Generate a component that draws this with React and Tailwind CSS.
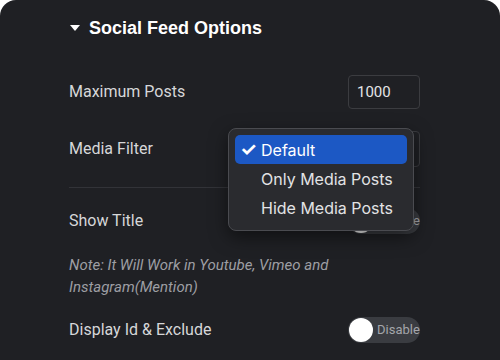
import React from "react";

function Toggle() {
  return (
    <div className="flex h-[26px] w-[72px] items-center rounded-full bg-[#3a3c41] pl-[1px]">
      <div className="h-[24px] w-[24px] rounded-full bg-white" />
      <span className="ml-[4px] text-[13px] text-[#a4a6ab]">Disable</span>
    </div>
  );
}

export default function App() {
  return (
    <div className="h-[360px] w-[500px] overflow-hidden bg-white" style={{ fontFamily: "Roboto, 'Noto Sans', sans-serif" }}>
      <div className="relative h-full w-full rounded-t-[16px] bg-[#1f2024] pl-[69px] pr-[80px]">
        <div className="flex h-[24px] items-center pt-[16px] box-content">
          <svg width="10" height="6" viewBox="0 0 10 6" className="mr-[9px] ml-[1px]">
            <path d="M0 0 L10 0 L5 6 Z" fill="#ffffff" />
          </svg>
          <span className="text-[18px] font-bold text-white" style={{ fontFamily: "'Liberation Sans', Arial, sans-serif" }}>
            Social Feed Options
          </span>
        </div>

        <div className="mt-[35px] flex h-[34px] items-center justify-between">
          <span className="text-[16px] text-[#d6d7d9]">Maximum Posts</span>
          <div className="flex h-[34px] w-[72px] items-center rounded-[4px] border border-[#3b3c40] pl-[8px] text-[15px] text-[#e4e5e7]">
            1000
          </div>
        </div>

        <div className="mt-[22px] flex h-[36px] items-center justify-between">
          <span className="text-[16px] text-[#d6d7d9]">Media Filter</span>
          <div className="flex h-[36px] w-[72px] items-center rounded-[4px] border border-[#3b3c40] pl-[8px] text-[14px] text-[#e4e5e7]">
            Default
          </div>
        </div>

        <div className="mt-[20px] h-px bg-[#323338]" />

        <div className="mt-[20px] flex h-[26px] items-center justify-between">
          <span className="text-[16px] text-[#d6d7d9]">Show Title</span>
          <Toggle />
        </div>

        <div className="mt-[20px] text-[15px] italic leading-[22px] text-[#9d9ea3]">
          <div>Note: It Will Work in Youtube, Vimeo and</div>
          <div>Instagram(Mention)</div>
        </div>

        <div className="mt-[19px] flex h-[26px] items-center justify-between">
          <span className="text-[16px] text-[#d6d7d9]">Display Id &amp; Exclude</span>
          <Toggle />
        </div>

        <div
          className="absolute left-[228px] top-[128px] w-[186px] rounded-[8px] border border-[#4a4b50] bg-[#2a2b2f] px-[6px] pb-[8px] pt-[6px] shadow-[0_6px_18px_rgba(0,0,0,0.5)]"
          style={{ fontFamily: "Inter, Roboto, sans-serif" }}
        >
          <div className="flex h-[29px] items-center rounded-[5px] bg-[#1c58c4] text-[16px] text-white">
            <span className="ml-[5px] w-[21px] text-[19px] font-bold leading-none">✓</span>
            <span>Default</span>
          </div>
          <div className="flex h-[29px] items-center pl-[26px] text-[16px] text-[#e2e3e5]">Only Media Posts</div>
          <div className="flex h-[29px] items-center pl-[26px] text-[16px] text-[#e2e3e5]">Hide Media Posts</div>
        </div>
      </div>
    </div>
  );
}
